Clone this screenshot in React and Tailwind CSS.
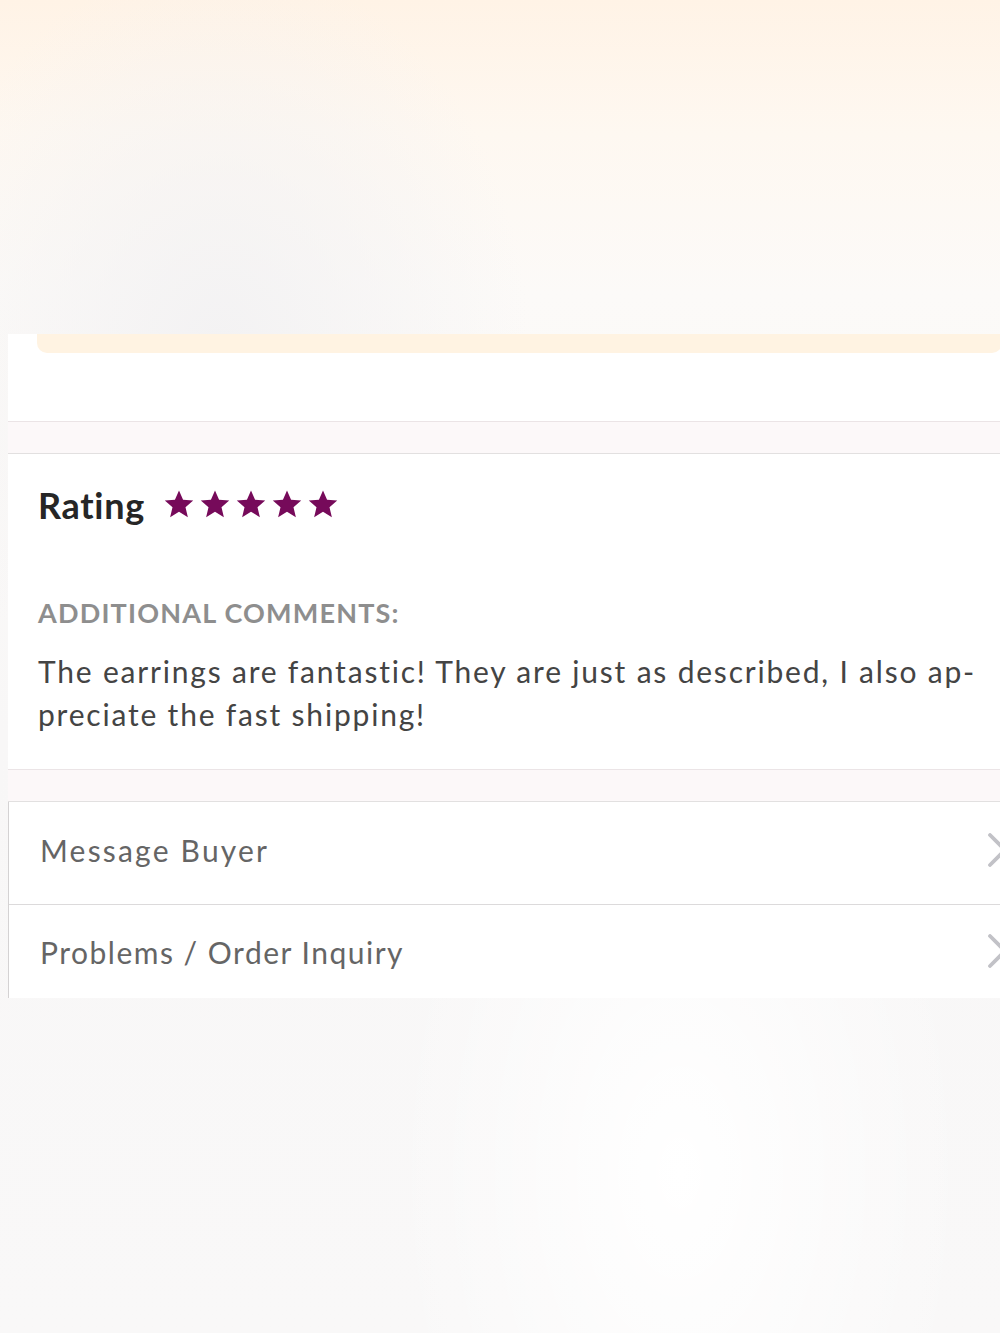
import React from "react";

const Star = () => (
  <svg viewBox="0 0 24 24" className="h-[32px] w-[32px]" aria-hidden="true">
    <path
      d="M12 1.8l3.05 7.02 7.6.62-5.78 4.98 1.78 7.43L12 17.86l-6.65 4 1.78-7.43L1.35 9.44l7.6-.62z"
      fill="#760a5a"
    />
  </svg>
);

const Chevron = () => (
  <svg
    viewBox="0 0 22 34"
    className="ml-auto -mr-[9px] h-[34px] w-[22px] shrink-0"
    aria-hidden="true"
  >
    <polyline
      points="3,2 18,17 3,32"
      fill="none"
      stroke="#c2c2c7"
      strokeWidth="3.8"
      strokeLinecap="round"
      strokeLinejoin="round"
    />
  </svg>
);

const Divider = () => (
  <div className="h-[33px] border-y border-t-[#ebe4e6] border-b-[#e2e0e0] bg-[#fcf8f9]" />
);

const Row = ({ label, last, tracking }) => (
  <div
    className={
      "flex pl-[31px] " +
      (last ? "h-[93px] items-start pt-[29px]" : "h-[103px] items-center pb-[6px] border-b border-[#dcdadb]")
    }
  >
    <span className={"whitespace-nowrap text-[30px] leading-[36px] text-[#656565] " + tracking}>
      {label}
    </span>
    <Chevron />
  </div>
);

export default function App() {
  return (
    <div
      className="flex min-h-[1333px] w-full flex-col overflow-hidden bg-[radial-gradient(ellipse_at_22%_26%,#f3f2f3_0%,rgba(243,242,243,0)_28%),radial-gradient(ellipse_at_68%_88%,#ffffff_0%,rgba(255,255,255,0)_30%),linear-gradient(180deg,#fff3e6_0%,#fef8f1_10%,#fcfaf8_22%,#f8f7f7_55%,#f9f8f8_100%)]"
      style={{ fontFamily: "Lato, 'Open Sans', Arial, sans-serif" }}
    >
      <div className="h-[334px] shrink-0" />

      <div className="ml-[8px] flex h-[664px] flex-col overflow-hidden bg-white">
        {/* notice banner tail */}
        <div className="h-[87px] shrink-0">
          <div className="ml-[29px] -mr-[2px] h-[19px] rounded-b-[10px] bg-[#fff3e2]" />
        </div>

        <Divider />

        {/* rating + comments */}
        <div className="flex h-[315px] shrink-0 flex-col px-[30px] pt-[30px]">
          <div className="flex items-center gap-[20px]">
            <span className="text-[36px] font-bold leading-[43px] tracking-[0.7px] text-[#262626]">
              Rating
            </span>
            <div className="-ml-[2px] mb-[4px] flex items-center gap-[4px]">
              <Star />
              <Star />
              <Star />
              <Star />
              <Star />
            </div>
          </div>
          <div className="mt-[69px] whitespace-nowrap text-[27px] font-bold leading-[34px] tracking-[1.2px] text-[#8e8e8e]">
            ADDITIONAL COMMENTS:
          </div>
          <p className="mt-[20px] whitespace-nowrap text-[30px] leading-[43px] tracking-[1.8px] text-[#444444]">
            The earrings are fantastic! They are just as described, I also ap-
            <br />
            preciate the fast shipping!
          </p>
        </div>

        <Divider />

        {/* actions */}
        <div className="flex flex-col border-l-[1.5px] border-[#d4d2d3]">
          <Row label="Message Buyer" tracking="tracking-[2.2px]" />
          <Row label="Problems / Order Inquiry" tracking="tracking-[1.5px]" last />
        </div>
      </div>
    </div>
  );
}
